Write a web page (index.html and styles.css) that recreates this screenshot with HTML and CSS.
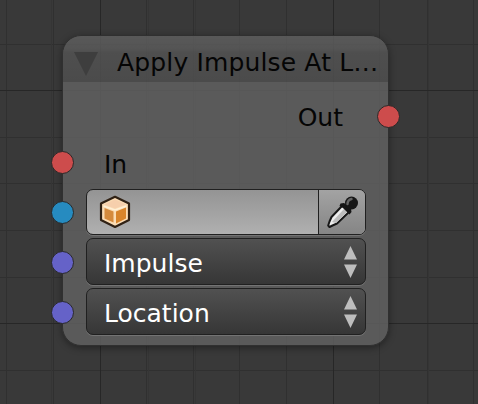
FILE: index.html
```html
<!DOCTYPE html>
<html lang="en">
<head>
<meta charset="utf-8">
<title>Node editor</title>
<link rel="stylesheet" href="styles.css">
</head>
<body>
<main class="editor">
  <svg class="grid" width="478" height="404" aria-hidden="true">
    <path class="minor" d="M6.500 0V404M53.500 0V404M146.500 0V404M193.500 0V404M239.500 0V404M286.500 0V404M379.500 0V404M427.500 0V404M473.500 0V404M0 44.500H478M0 137.500H478M0 183.500H478M0 230.500H478M0 277.500H478M0 370.500H478"/>
    <path class="soft" d="M51.500 0V404M148.500 0V404M195.500 0V404M428.500 0V404"/>
    <path class="major" d="M100.500 0V404M333.500 0V404M0 90.500H478M0 323.500H478"/>
  </svg>
  <section class="node">
    <header class="header">
      <svg class="collapse" width="24" height="24"><path d="M0 0H24L12 24Z"/></svg>
      <span class="title">Apply Impulse At L…</span>
    </header>
    <div class="row output"><span>Out</span><i class="socket red right"></i></div>
    <div class="row input"><span>In</span><i class="socket red"></i></div>
    <div class="field object">
      <i class="socket blue"></i>
      <div class="picker">
        <svg width="32" height="34" viewBox="0 0 32 34">
          <path d="M16 1.800 30 8.500V25L16 32 2 25V8.500Z" fill="#fbdcb4" stroke="#302114" stroke-width="2.200" stroke-linejoin="round"/>
          <path d="M5 9.500 16 4.500 27 9.500 16 13.500Z" fill="#f6cfac"/>
          <path d="M5.500 13 14.500 16.500V27.500L5.500 23.500Z" fill="#d58a3c"/>
          <path d="M17 16.500 27 12.500V23.500L17 28.500Z" fill="#d8842b"/>
          <path d="M4.500 11 16 15 27.500 11" fill="none" stroke="#fff0d6" stroke-width="1.500"/>
        </svg>
      </div>
      <div class="eyedropper">
        <svg width="32" height="32" viewBox="0 0 32 32">
          <path d="M15.500 9.500 22 16 10 27.500 5.500 29.500 2.500 31 1.200 29.500 2.500 25.500 4.500 21Z" fill="#eee" stroke="#171717" stroke-width="2" stroke-linejoin="round"/>
          <path d="M5 26 17 13 20 16 9 27Z" fill="#bdbdbd"/>
          <path d="M13.500 7.500 17 7 20 9 24 13 24.500 16 22.500 18.500 19 15 16 12 12.500 10Z" fill="#151515"/>
          <circle cx="24.500" cy="7" r="6.500" fill="#161616"/>
          <path d="M20.500 8Q20.500 4 24.500 3" fill="none" stroke="#666" stroke-width="2.400" stroke-linecap="round"/>
        </svg>
      </div>
    </div>
    <div class="field menu"><i class="socket violet"></i><span>Impulse</span>
      <svg class="arrows" width="13" height="32"><path d="M0 13.500 6.500 0 13 13.500ZM0 18.500H13L6.500 32Z"/></svg>
    </div>
    <div class="field menu"><i class="socket violet"></i><span>Location</span>
      <svg class="arrows" width="13" height="32"><path d="M0 13.500 6.500 0 13 13.500ZM0 18.500H13L6.500 32Z"/></svg>
    </div>
  </section>
</main>
</body>
</html>
```
FILE: styles.css
```css
* { box-sizing: border-box; }
body {
  margin: 0;
  font: 25px/30px "DejaVu Sans", sans-serif;
  color: #050505;
}
.editor {
  position: relative;
  width: 478px;
  height: 404px;
  padding: 35px 0 0 62px;
  background: #393939;
  overflow: hidden;
}
.grid { position: absolute; top: 0; left: 0; }
.grid path { fill: none; stroke-width: 1; }
.grid .minor { stroke: #303030; }
.grid .soft { stroke: #353535; }
.grid .major { stroke: #272727; }
.node {
  position: relative;
  width: 327px;
  height: 311px;
  border: 1px solid #303030;
  border-radius: 19px;
  background: rgba(98, 98, 98, .82);
  box-shadow: 0 2px 7px rgba(0, 0, 0, .38);
}
.header {
  display: flex;
  height: 46px;
  padding-left: 11px;
  border-radius: 18px 18px 0 0;
  background: linear-gradient(rgba(0, 0, 0, .02) 0, rgba(0, 0, 0, .06) 12px, rgba(0, 0, 0, .13) 17px, rgba(0, 0, 0, .17) 100%);
}
.collapse { margin-top: 16px; fill: #3e3e3e; }
.title { margin: 12px 0 0 19px; letter-spacing: .15px; white-space: nowrap; }
.row { position: relative; height: 47px; }
.row span { display: block; }
.output { padding: 21px 45px 0 0; text-align: right; }
.input { padding: 21px 0 0 41px; height: 60px; }
.field {
  position: relative;
  display: flex;
  width: 280px;
  height: 46px;
  margin-left: 23px;
  border: 1px solid #202020;
  border-radius: 7px;
  box-shadow: 0 1px 0 #737373;
}
.object { background: linear-gradient(#949494, #b0b0b0); }
.picker { flex: 1; padding: 5px 0 0 12px; }
.picker svg, .eyedropper svg { display: block; }
.eyedropper {
  width: 47px;
  padding: 6px 0 0 8px;
  border-left: 1px solid #202020;
  border-radius: 0 6px 6px 0;
  background: linear-gradient(#a3a3a3, #858585);
}
.menu {
  height: 47px;
  margin-top: 3px;
  padding: 10px 8px 0 17px;
  justify-content: space-between;
  color: #fff;
  background: linear-gradient(#515151, #363636);
}
.arrows { margin-top: -3px; fill: #bdbdbd; }
.socket {
  position: absolute;
  left: -12px;
  width: 23px;
  height: 23px;
  border: 1px solid #292929;
  border-radius: 50%;
}
.input .socket { top: 22px; }
.output .socket { left: auto; right: -12px; top: 23px; }
.field .socket { left: -36px; top: 11px; }
.menu .socket { top: 12px; }
.red { background: #cd4c4c; }
.blue { background: #268bc0; }
.violet { background: #6562c8; }
```
